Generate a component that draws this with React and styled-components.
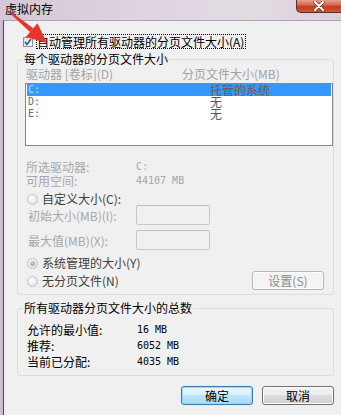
import React from 'react'
import styled, { createGlobalStyle } from 'styled-components'

const GlobalStyle = createGlobalStyle`
  html, body {
    margin: 0;
    padding: 0;
    background: #f0f0f0;
  }
  body {
    font-family: 'Noto Sans CJK SC', 'Noto Sans', sans-serif;
    font-size: 12px;
    color: #000;
  }
`

const mono = `'DejaVu Sans Mono', 'Liberation Mono', monospace`

const Window = styled.div`
  position: relative;
  width: 341px;
  height: 415px;
  display: flex;
  flex-direction: column;
  background: linear-gradient(90deg, #d9cfe0 0, #c6b4cf 1px, #cbbcd3 3px, #d9cfdc 40%);
  overflow: hidden;
`

const TitleBar = styled.div`
  flex: none;
  height: 20px;
  display: flex;
  justify-content: space-between;
  align-items: flex-start;
  background: linear-gradient(90deg, #d4c8d8, #ded5e0 45%, #e3dbe4 75%, #d9cfdb);
`

const Title = styled.div`
  padding: 2px 0 0 5px;
  line-height: 14px;
  font-size: 12px;
  color: #000;
`

const CloseButton = styled.div`
  width: 44px;
  height: 12px;
  display: flex;
  align-items: center;
  justify-content: center;
  border: 1px solid #5e2b22;
  border-top: none;
  border-right: none;
  border-radius: 0 0 0 5px;
  background: linear-gradient(#e7a08f, #d86a52 40%, #c43c22 55%, #d0563b);
`

const Frame = styled.div`
  flex: 1;
  display: flex;
  padding-left: 3px;
`

const Body = styled.div`
  flex: 1;
  display: flex;
  flex-direction: column;
  background: #f0f0f0;
  border-left: 1px solid #4d4a58;
  border-top: 1px solid #a9a4b0;
  padding: 0 7px 0 13px;
`

const AutoRow = styled.div`
  display: flex;
  align-items: center;
  height: 15px;
  margin-top: 13px;
  padding-left: 6px;
`

const CheckBox = styled.div`
  box-sizing: border-box;
  width: 10px;
  height: 10px;
  margin-right: 3px;
  border: 1px solid #8e8f8f;
  background: linear-gradient(135deg, #dcdcdc, #fbfbfb);
  display: flex;
  align-items: center;
  justify-content: center;
`

const FocusLabel = styled.div`
  height: 13px;
  line-height: 13px;
  border: 1px dotted #000;
  padding: 0 1px 0 0;
  white-space: nowrap;
`

const GroupBox = styled.fieldset`
  margin: ${p => p.$top}px 0 0 0;
  min-width: 0;
  border: 1px solid #d5dfe5;
  border-radius: 3px;
  padding: 0 0 ${p => p.$bottom}px 7px;
  display: flex;
  flex-direction: column;
`

const Legend = styled.legend`
  padding: 0 1px;
  margin-left: -2px;
  line-height: 12px;
  font-size: 12px;
  color: #000;
`

const ListHeader = styled.div`
  display: flex;
  margin-top: 2px;
  height: 14px;
  line-height: 14px;
  color: #a3a3a3;
`

const HeaderCell = styled.div`
  width: ${p => (p.$w ? `${p.$w}px` : 'auto')};
  padding-left: 1px;
  box-sizing: border-box;
  white-space: nowrap;
`

const DriveList = styled.div`
  box-sizing: border-box;
  margin-top: 2px;
  height: 63px;
  border: 1px solid #828790;
  background: #fff;
  padding: 0 1px;
`

const DriveRow = styled.div`
  display: flex;
  height: 12px;
  line-height: 12px;
  background: ${p => (p.$selected ? '#3399ff' : 'transparent')};
`

const DriveCell = styled.div`
  width: 183px;
  padding-left: 1px;
  box-sizing: border-box;
  font-family: ${mono};
  font-size: 10px;
  color: ${p => (p.$selected ? '#d3d9e2' : '#6d6d6d')};
`

const SizeCell = styled.div`
  font-size: 12px;
  color: ${p => (p.$selected ? '#7d5637' : '#5a5a5a')};
`

const InfoGrid = styled.div`
  display: grid;
  grid-template-columns: 111px auto;
  margin-top: 14px;
  line-height: 14px;
  color: #a7a7a7;
`

const InfoLabel = styled.div`
  padding-left: 1px;
`

const MonoValue = styled.div`
  font-family: ${mono};
  font-size: 10px;
  color: ${p => p.$color || '#000'};
`

const RadioRow = styled.div`
  display: flex;
  align-items: center;
  height: 12px;
  margin-top: ${p => p.$top}px;
  padding-left: 2px;
`

const Radio = styled.div`
  box-sizing: border-box;
  flex: none;
  width: 11px;
  height: 11px;
  margin-right: 4px;
  border-radius: 50%;
  border: 1px solid #c3c3c3;
  background: radial-gradient(circle at 40% 35%, #ffffff, #e2e2e2 80%);
  display: flex;
  align-items: center;
  justify-content: center;
  &::after {
    content: '';
    display: ${p => (p.$checked ? 'block' : 'none')};
    width: 5px;
    height: 5px;
    border-radius: 50%;
    background: radial-gradient(circle at 40% 35%, #d6d6d6, #8c8c8c);
  }
`

const RadioLabel = styled.div`
  line-height: 12px;
  color: #3f3f3f;
  white-space: nowrap;
`

const FieldRow = styled.div`
  display: flex;
  align-items: center;
  height: 20px;
  margin-top: ${p => p.$top}px;
`

const FieldLabel = styled.div`
  width: 111px;
  padding-left: 3px;
  box-sizing: border-box;
  color: #a7a7a7;
  white-space: nowrap;
`

const TextBox = styled.div`
  box-sizing: border-box;
  width: 74px;
  height: 20px;
  border: 1px solid #c9c9c9;
  border-top-color: #bdbdbd;
  border-radius: 2px;
  background: #f0f0f0;
`

const BottomRow = styled.div`
  display: flex;
  align-items: center;
  justify-content: space-between;
  height: 19px;
  margin-top: 2px;
  padding-left: 2px;
`

const RadioGroup = styled.div`
  display: flex;
  align-items: center;
  padding-top: 1px;
`

const Button = styled.div`
  box-sizing: border-box;
  width: 72px;
  height: 19px;
  display: flex;
  align-items: center;
  justify-content: center;
  border-radius: 3px;
  font-size: 12px;
  line-height: 12px;
  border: 1px solid ${p => (p.$primary ? '#3c7fb1' : p.$disabled ? '#b2b6b9' : '#707070')};
  color: ${p => (p.$disabled ? '#8d8d8d' : '#000')};
  background: ${p =>
    p.$primary
      ? 'linear-gradient(#eaf6fd, #d9f0fc 50%, #bee6fd 50%, #a7d9f5)'
      : p.$disabled
        ? '#f4f4f4'
        : 'linear-gradient(#f2f2f2, #ebebeb 50%, #dddddd 50%, #cfcfcf)'};
  box-shadow: ${p => (p.$primary ? 'inset 0 0 0 1px #9ad5f3, 0 0 1px #6fc0ec' : 'inset 0 0 0 1px #fcfcfc')};
  margin-right: ${p => p.$right || 0}px;
`

const TotalsGrid = styled.div`
  display: grid;
  grid-template-columns: 112px auto;
  grid-auto-rows: 16px;
  align-items: center;
  padding-top: 7px;
`

const TotalLabel = styled.div`
  padding-left: 2px;
  color: #000;
`

const ButtonBar = styled.div`
  display: flex;
  justify-content: flex-end;
  gap: 9px;
  margin-top: 10px;
`

const ArrowLayer = styled.svg`
  position: absolute;
  left: 0;
  top: 0;
  pointer-events: none;
`

const drives = [
  { id: 'C:', size: '托管的系统', selected: true },
  { id: 'D:', size: '无' },
  { id: 'E:', size: '无' }
]

const totals = [
  ['允许的最小值:', '16 MB'],
  ['推荐:', '6052 MB'],
  ['当前已分配:', '4035 MB']
]

const App = () => {
  return (
    <Window>
      <GlobalStyle />
      <TitleBar>
        <Title>虚拟内存</Title>
        <CloseButton>
          <svg width='12' height='10' viewBox='0 0 12 10'>
            <path d='M2 1 L10 9 M10 1 L2 9' stroke='#6b3b33' strokeWidth='3.4' strokeLinecap='round' />
            <path d='M2 1 L10 9 M10 1 L2 9' stroke='#ffffff' strokeWidth='2' strokeLinecap='round' />
          </svg>
        </CloseButton>
      </TitleBar>
      <Frame>
        <Body>
          <AutoRow>
            <CheckBox>
              <svg width='8' height='8' viewBox='0 0 8 8'>
                <path d='M1 4 L3 6.5 L7 1' stroke='#3b529a' strokeWidth='1.6' fill='none' />
              </svg>
            </CheckBox>
            <FocusLabel>自动管理所有驱动器的分页文件大小(A)</FocusLabel>
          </AutoRow>

          <GroupBox $top={4} $bottom={4}>
            <Legend>每个驱动器的分页文件大小</Legend>
            <ListHeader>
              <HeaderCell $w={156}>驱动器 [卷标](D)</HeaderCell>
              <HeaderCell>分页文件大小(MB)</HeaderCell>
            </ListHeader>
            <DriveList>
              {drives.map(d => (
                <DriveRow key={d.id} $selected={d.selected}>
                  <DriveCell $selected={d.selected}>{d.id}</DriveCell>
                  <SizeCell $selected={d.selected}>{d.size}</SizeCell>
                </DriveRow>
              ))}
            </DriveList>
            <InfoGrid>
              <InfoLabel>所选驱动器:</InfoLabel>
              <MonoValue $color='#a7a7a7'>C:</MonoValue>
              <InfoLabel>可用空间:</InfoLabel>
              <MonoValue $color='#a7a7a7'>44107 MB</MonoValue>
            </InfoGrid>
            <RadioRow $top={5}>
              <Radio />
              <RadioLabel>自定义大小(C):</RadioLabel>
            </RadioRow>
            <FieldRow $top={0}>
              <FieldLabel>初始大小(MB)(I):</FieldLabel>
              <TextBox />
            </FieldRow>
            <FieldRow $top={5}>
              <FieldLabel>最大值(MB)(X):</FieldLabel>
              <TextBox />
            </FieldRow>
            <RadioRow $top={7}>
              <Radio $checked />
              <RadioLabel>系统管理的大小(Y)</RadioLabel>
            </RadioRow>
            <BottomRow>
              <RadioGroup>
                <Radio />
                <RadioLabel>无分页文件(N)</RadioLabel>
              </RadioGroup>
              <Button $disabled $right={9}>设置(S)</Button>
            </BottomRow>
          </GroupBox>

          <GroupBox $top={7} $bottom={6}>
            <Legend>所有驱动器分页文件大小的总数</Legend>
            <TotalsGrid>
              {totals.map(([label, value]) => (
                <React.Fragment key={label}>
                  <TotalLabel>{label}</TotalLabel>
                  <MonoValue>{value}</MonoValue>
                </React.Fragment>
              ))}
            </TotalsGrid>
          </GroupBox>

          <ButtonBar>
            <Button $primary>确定</Button>
            <Button>取消</Button>
          </ButtonBar>
        </Body>
      </Frame>

      <ArrowLayer width='60' height='50' viewBox='0 0 60 50'>
        <polygon points='10.4,13.8 11.6,12.2 33.2,28.3 30,32.1' fill='#e8322a' />
        <polygon points='47,43 25.8,37.1 37.4,23.3' fill='#e8322a' />
      </ArrowLayer>
    </Window>
  )
}

export default App
